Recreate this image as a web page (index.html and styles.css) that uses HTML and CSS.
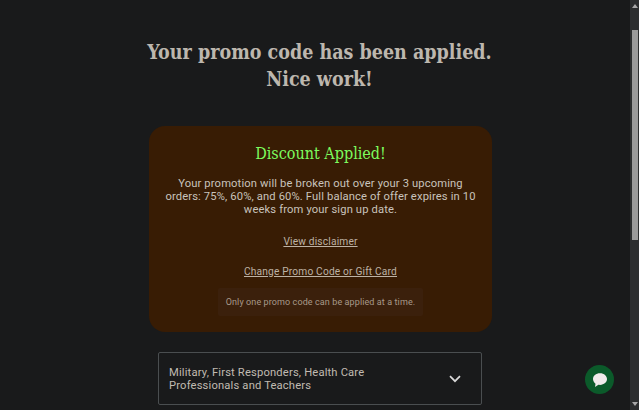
FILE: index.html
```html
<!DOCTYPE html>
<html lang="en">
<head>
<meta charset="utf-8">
<title>Promo code applied</title>
<link rel="stylesheet" href="styles.css">
</head>
<body>
<main class="page">
  <h1 class="title">Your promo code has been applied.<br>Nice work!</h1>
  <section class="card">
    <h2 class="card-title">Discount Applied!</h2>
    <p class="card-text">Your promotion will be broken out over your 3 upcoming orders: 75%, 60%, and 60%. Full balance of offer expires in 10 weeks from your sign up date.</p>
    <a class="link" href="#">View disclaimer</a>
    <a class="link" href="#">Change Promo Code or Gift Card</a>
    <div class="notice">Only one promo code can be applied at a time.</div>
  </section>
  <button class="accordion" type="button">
    <span class="accordion-label">Military, First Responders, Health Care Professionals and Teachers</span>
    <svg class="chevron" viewBox="0 0 12 8" width="12" height="8" aria-hidden="true"><path d="M1 1.2 6 6.2 11 1.2" fill="none" stroke="#d8d8d8" stroke-width="1.7"/></svg>
  </button>
</main>
<button class="chat" type="button" aria-label="Chat">
  <svg viewBox="0 0 16 16" width="16" height="16" aria-hidden="true"><path d="M8 1.2C3.9 1.2 1 3.8 1 7.1c0 1.9 1 3.500 2.500 4.600L3 15l3.400-2.200c.5.1 1 .1 1.600.1 4.100 0 7-2.600 7-5.800S12.100 1.200 8 1.200z" fill="#f1ebeb"/></svg>
</button>
<div class="scrollbar">
  <span class="arrow arrow-up"></span>
  <span class="thumb"></span>
  <span class="arrow arrow-down"></span>
</div>
</body>
</html>
```
FILE: styles.css
```css
html, body {
  margin: 0;
  height: 100%;
  overflow: hidden;
  background: #191a1b;
}
body {
  font-family: "Roboto", "Liberation Sans", sans-serif;
  color: #c8c3bc;
}
.page {
  display: flex;
  flex-direction: column;
  align-items: center;
  padding-top: 39px;
}
.title {
  margin: 0 0 33px;
  font-family: "DejaVu Serif Condensed", "DejaVu Serif", serif;
  font-size: 19.5px;
  line-height: 27px;
  font-weight: 700;
  text-align: center;
  color: #bdb7ae;
}
.card {
  box-sizing: border-box;
  width: 343px;
  height: 206px;
  margin-left: 2px;
  padding: 17px 10px 0;
  display: flex;
  flex-direction: column;
  align-items: center;
  background: #381c04;
  border-radius: 16px;
}
.card-title {
  margin: 0 0 12px;
  font-family: "DejaVu Serif Condensed", "DejaVu Serif", serif;
  font-size: 16px;
  line-height: 22px;
  font-weight: 400;
  color: #7dfb5e;
}
.card-text {
  margin: 0 0 19px;
  font-size: 11.2px;
  letter-spacing: 0.14px;
  line-height: 13px;
  text-align: center;
  color: #c8c3bc;
}
.link {
  font-size: 10.2px;
  letter-spacing: 0.17px;
  line-height: 13px;
  margin-bottom: 17px;
  color: #bdb2a5;
}
.notice {
  box-sizing: border-box;
  width: 205px;
  height: 28px;
  margin-top: -7px;
  padding: 8px 0;
  font-size: 9px;
  letter-spacing: 0.1px;
  line-height: 12px;
  text-align: center;
  white-space: nowrap;
  color: #a89a8a;
  background: #3b200c;
  border-radius: 2px;
}
.accordion {
  box-sizing: border-box;
  width: 324px;
  height: 53px;
  margin: 20px 0 0 1px;
  padding: 0 20px 0 10px;
  display: flex;
  align-items: center;
  justify-content: space-between;
  background: #191a1b;
  border: 1px solid #4a4e50;
  border-radius: 2px;
  font: inherit;
  font-size: 11.2px;
  letter-spacing: 0.17px;
  line-height: 13px;
  color: #c0bab1;
  text-align: left;
}
.accordion-label {
  width: 215px;
}
.chat {
  position: fixed;
  left: 585px;
  top: 365px;
  width: 29px;
  height: 29px;
  padding: 0;
  display: flex;
  align-items: center;
  justify-content: center;
  border: 0;
  border-radius: 50%;
  background: #0b5a2a;
}
.scrollbar {
  position: fixed;
  top: 0;
  right: 0;
  bottom: 0;
  width: 9px;
  display: flex;
  flex-direction: column;
  align-items: center;
  background: #2c2e2f;
}
.arrow {
  width: 0;
  height: 0;
  border-left: 3px solid transparent;
  border-right: 3px solid transparent;
}
.arrow-up {
  margin-top: 4px;
  border-bottom: 4px solid #a8a8a8;
}
.arrow-down {
  margin-top: auto;
  margin-bottom: 4px;
  border-top: 4px solid #a8a8a8;
}
.thumb {
  width: 6px;
  height: 210px;
  margin-top: 22px;
  background: #9a9a9a;
}
```
